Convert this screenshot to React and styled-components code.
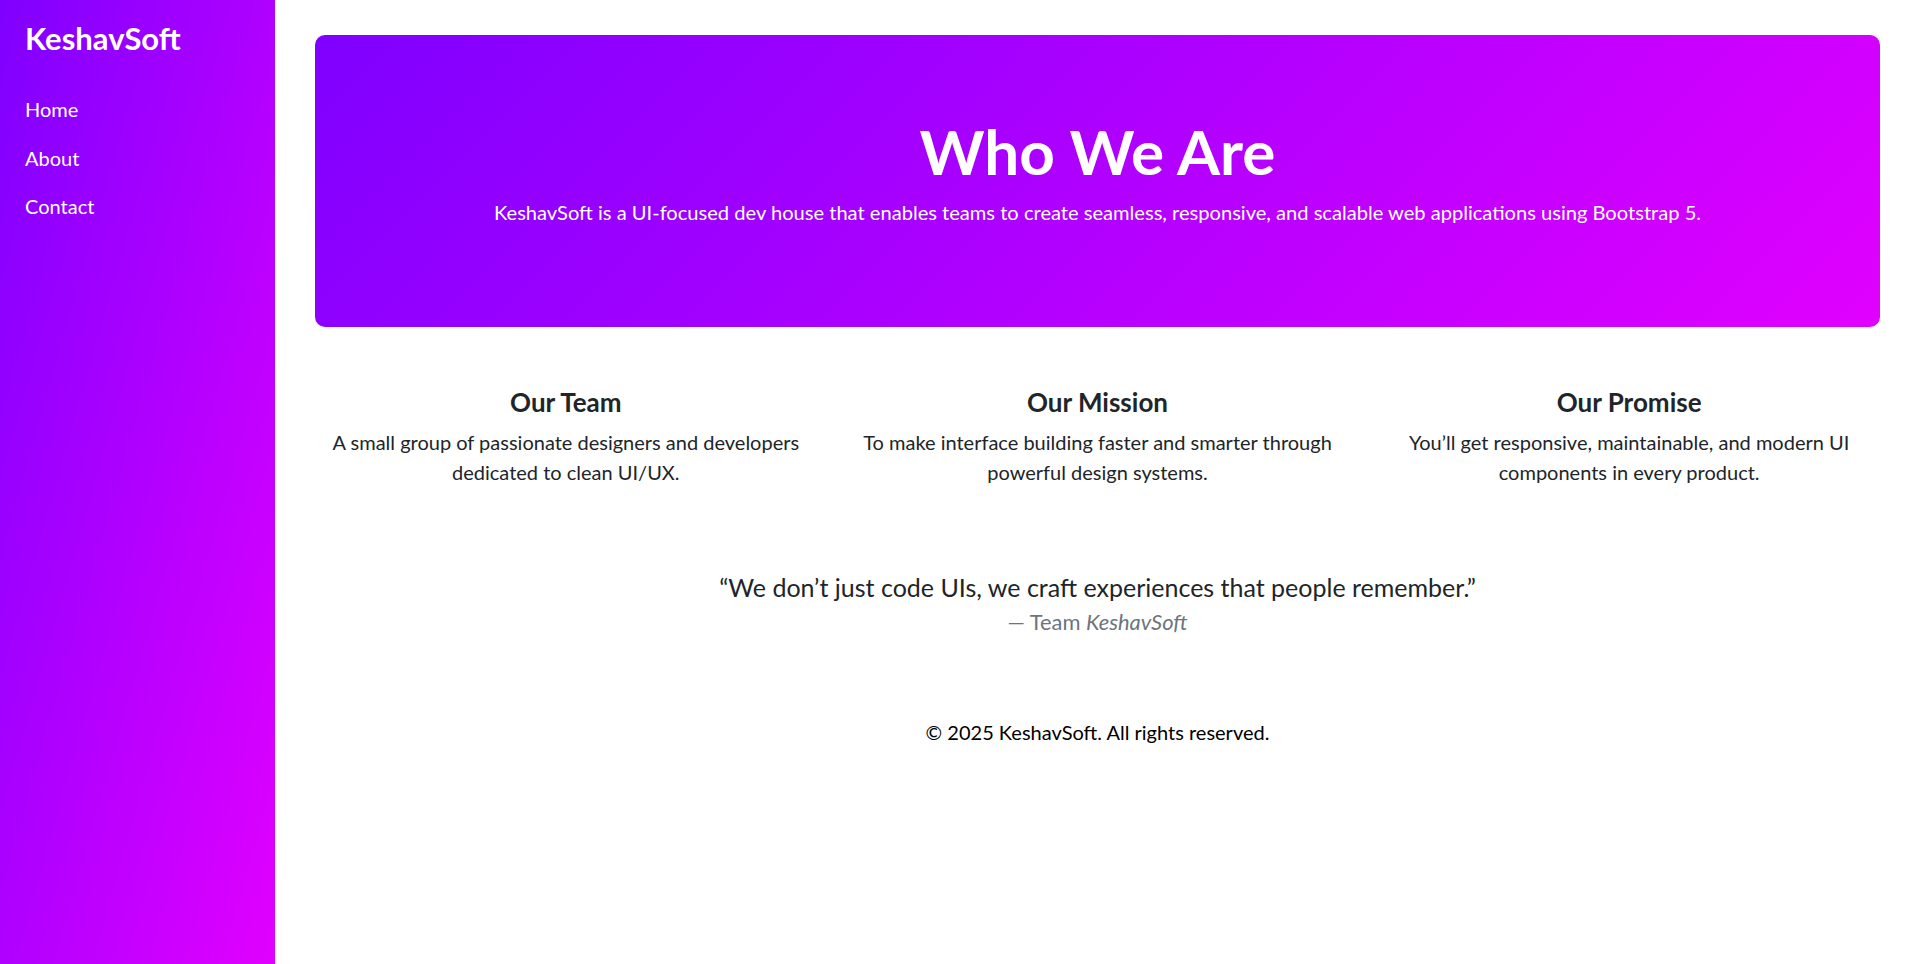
import React from "react";
import styled, { createGlobalStyle } from "styled-components";

const GlobalStyle = createGlobalStyle`
  *, *::before, *::after { box-sizing: border-box; }
  html, body { margin: 0; padding: 0; }
  body {
    font-family: Lato, "Noto Sans", sans-serif;
    font-size: 20px;
    line-height: 1.5;
    color: #212529;
    background: #fff;
  }
`;

const Layout = styled.div`
  display: flex;
  min-height: 100vh;
`;

const Sidebar = styled.aside`
  width: 275px;
  flex-shrink: 0;
  padding: 20px 24px 20px 25px;
  background: linear-gradient(to bottom right, #7f00ff, #e100ff);
  color: #fff;
`;

const Brand = styled.div`
  font-size: 31px;
  font-weight: 700;
  line-height: 1.2;
  margin: 0 0 28px;
`;

const Nav = styled.nav`
  display: flex;
  flex-direction: column;
`;

const NavLink = styled.a`
  display: block;
  padding: 9.17px 0;
  font-size: 20px;
  line-height: 30px;
  color: #fff;
  text-decoration: none;
  cursor: pointer;
`;

const Main = styled.main`
  flex: 1;
  min-width: 0;
  padding: 35px 39px 40px 40px;
`;

const Hero = styled.section`
  border-radius: 10px;
  padding: 79px 40px 80px;
  background: linear-gradient(135deg, #7f00ff, #e100ff);
  color: #fff;
  text-align: center;
`;

const HeroTitle = styled.h1`
  margin: 0 0 9px;
  font-size: 62px;
  font-weight: 700;
  line-height: 1.2;
`;

const HeroText = styled.p`
  margin: 0 0 20px;
  font-size: 20.1px;
  line-height: 30px;
`;

const Features = styled.div`
  display: grid;
  grid-template-columns: repeat(3, 1fr);
  margin: 60px -15px 0;
`;

const Feature = styled.div`
  padding: 0 15px;
  text-align: center;
`;

const FeatureTitle = styled.h5`
  margin: 0 0 8px;
  font-size: 26px;
  font-weight: 700;
  line-height: 1.2;
`;

const FeatureText = styled.p`
  margin: 0;
  font-size: 20px;
  line-height: 1.5;
`;

const Quote = styled.figure`
  margin: 82px 0 0;
  text-align: center;
`;

const QuoteText = styled.blockquote`
  margin: 0;
  font-size: 25px;
  line-height: 1.5;
`;

const QuoteCite = styled.figcaption`
  font-size: 21.9px;
  line-height: 1.5;
  color: #6c757d;
  cite { font-style: italic; }
`;

const Footer = styled.footer`
  margin-top: 78px;
  text-align: center;
  font-size: 20px;
  line-height: 1.5;
  color: #000;
`;

const features = [
  { title: "Our Team", text: "A small group of passionate designers and developers dedicated to clean UI/UX." },
  { title: "Our Mission", text: "To make interface building faster and smarter through powerful design systems." },
  { title: "Our Promise", text: "You’ll get responsive, maintainable, and modern UI components in every product." },
];

export default function App() {
  return (
    <>
      <GlobalStyle />
      <Layout>
        <Sidebar>
          <Brand>KeshavSoft</Brand>
          <Nav>
            <NavLink>Home</NavLink>
            <NavLink>About</NavLink>
            <NavLink>Contact</NavLink>
          </Nav>
        </Sidebar>
        <Main>
          <Hero>
            <HeroTitle>Who We Are</HeroTitle>
            <HeroText>
              KeshavSoft is a UI-focused dev house that enables teams to create seamless, responsive, and scalable web applications using Bootstrap 5.
            </HeroText>
          </Hero>
          <Features>
            {features.map((f) => (
              <Feature key={f.title}>
                <FeatureTitle>{f.title}</FeatureTitle>
                <FeatureText>{f.text}</FeatureText>
              </Feature>
            ))}
          </Features>
          <Quote>
            <QuoteText>“We don’t just code UIs, we craft experiences that people remember.”</QuoteText>
            <QuoteCite>
              — Team <cite>KeshavSoft</cite>
            </QuoteCite>
          </Quote>
          <Footer>© 2025 KeshavSoft. All rights reserved.</Footer>
        </Main>
      </Layout>
    </>
  );
}
